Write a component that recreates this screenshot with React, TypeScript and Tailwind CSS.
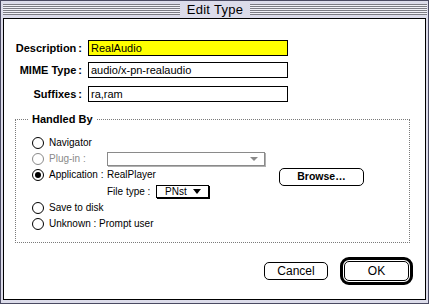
import React from "react";

function Radio({ checked, disabled }: { checked?: boolean; disabled?: boolean }) {
  return (
    <span
      className={`w-[12px] h-[12px] shrink-0 rounded-full border flex items-center justify-center bg-white ${
        disabled ? "border-[#8a8a8a]" : "border-black"
      }`}
    >
      {checked && <span className="w-[6px] h-[6px] rounded-full bg-black" />}
    </span>
  );
}

function Stripes() {
  return (
    <div className="flex-1 h-[11px] bg-[repeating-linear-gradient(to_bottom,#7c7c84_0px,#7c7c84_1px,#f2f2f8_1px,#f2f2f8_2px)]" />
  );
}

function Field({ label, value, yellow }: { label: string; value: string; yellow?: boolean }) {
  return (
    <div className="flex items-center h-[16px]">
      <div className="w-[78px] text-right font-bold text-[11px] leading-none">
        {label}
        <span className="ml-[2px]">:</span>
      </div>
      <div
        className={`ml-[6px] w-[200px] h-[16px] border border-black flex items-center pl-[2px] text-[11px] leading-none ${
          yellow ? "bg-[#ffff00]" : "bg-white"
        }`}
      >
        {value}
      </div>
    </div>
  );
}

export default function App() {
  return (
    <div className="w-[429px] h-[304px] bg-[#dcdcea] border border-[#4a4a62] flex flex-col font-['Liberation_Sans',Arial,sans-serif] text-black select-none">
      {/* title bar */}
      <div className="h-[17px] shrink-0 flex items-center pl-[2px] pr-[1px]">
        <Stripes />
        <div className="px-[7px] text-[13px] leading-none tracking-[0.3px]">Edit Type</div>
        <Stripes />
      </div>

      {/* content */}
      <div className="flex-1 ml-[2px] mr-[2px] mb-[3px] border border-black bg-white flex flex-col pt-[21px]">
        <Field label="Description" value="RealAudio" yellow />
        <div className="mt-[6px]">
          <Field label="MIME Type" value="audio/x-pn-realaudio" />
        </div>
        <div className="mt-[8px]">
          <Field label="Suffixes" value="ra,ram" />
        </div>

        <fieldset className="ml-[11px] mt-[11px] w-[395px] border border-dotted border-[#7a7a7a] pl-[16px] pb-[10px] text-[10px] leading-none">
          <legend className="-ml-[3px] px-[3px] font-bold text-[11px] leading-[13px]">Handled By</legend>

          <div className="mt-[9px] flex items-center h-[16px] gap-[5px]">
            <Radio />
            <span>Navigator</span>
          </div>

          <div className="flex items-center h-[16px]">
            <div className="w-[75px] flex items-center gap-[5px] text-[#8a8a8a]">
              <Radio disabled />
              <span>Plug-in :</span>
            </div>
            <div className="w-[158px] h-[14px] border border-[#8a8a8a] shadow-[1px_1px_0_#b0b0b0] flex items-center justify-end pr-[6px]">
              <span className="w-0 h-0 border-l-[4px] border-r-[4px] border-t-[4px] border-l-transparent border-r-transparent border-t-[#8a8a8a]" />
            </div>
          </div>

          <div className="flex items-center h-[16px]">
            <div className="w-[75px] flex items-center gap-[5px]">
              <Radio checked />
              <span>Application :</span>
            </div>
            <div className="w-[172px]">RealPlayer</div>
            <button className="mt-[3px] w-[85px] h-[18px] border border-black rounded-[5px] bg-white font-bold text-[10.5px] leading-none">
              Browse…
            </button>
          </div>

          <div className="flex items-center h-[17px] pl-[75px]">
            <span>File type :</span>
            <div className="ml-[6px] w-[53px] h-[13px] border border-black shadow-[1px_1px_0_#000] flex items-center justify-center gap-[6px] text-[10px]">
              <span>PNst</span>
              <span className="w-0 h-0 border-l-[4px] border-r-[4px] border-t-[5px] border-l-transparent border-r-transparent border-t-black" />
            </div>
          </div>

          <div className="flex items-center h-[16px] gap-[5px]">
            <Radio />
            <span>Save to disk</span>
          </div>

          <div className="flex items-center h-[16px] gap-[5px]">
            <Radio />
            <span>Unknown : Prompt user</span>
          </div>
        </fieldset>

        <div className="mt-[14px] mr-[12px] flex items-center justify-end gap-[12px]">
          <button className="w-[64px] h-[18px] border border-black rounded-[5px] bg-white text-[12px] leading-none">
            Cancel
          </button>
          <div className="w-[73px] h-[28px] border-[3px] border-black rounded-[9px] p-[1px] flex">
            <button className="flex-1 border border-black rounded-[5px] bg-white text-[12px] leading-none">OK</button>
          </div>
        </div>
      </div>
    </div>
  );
}
